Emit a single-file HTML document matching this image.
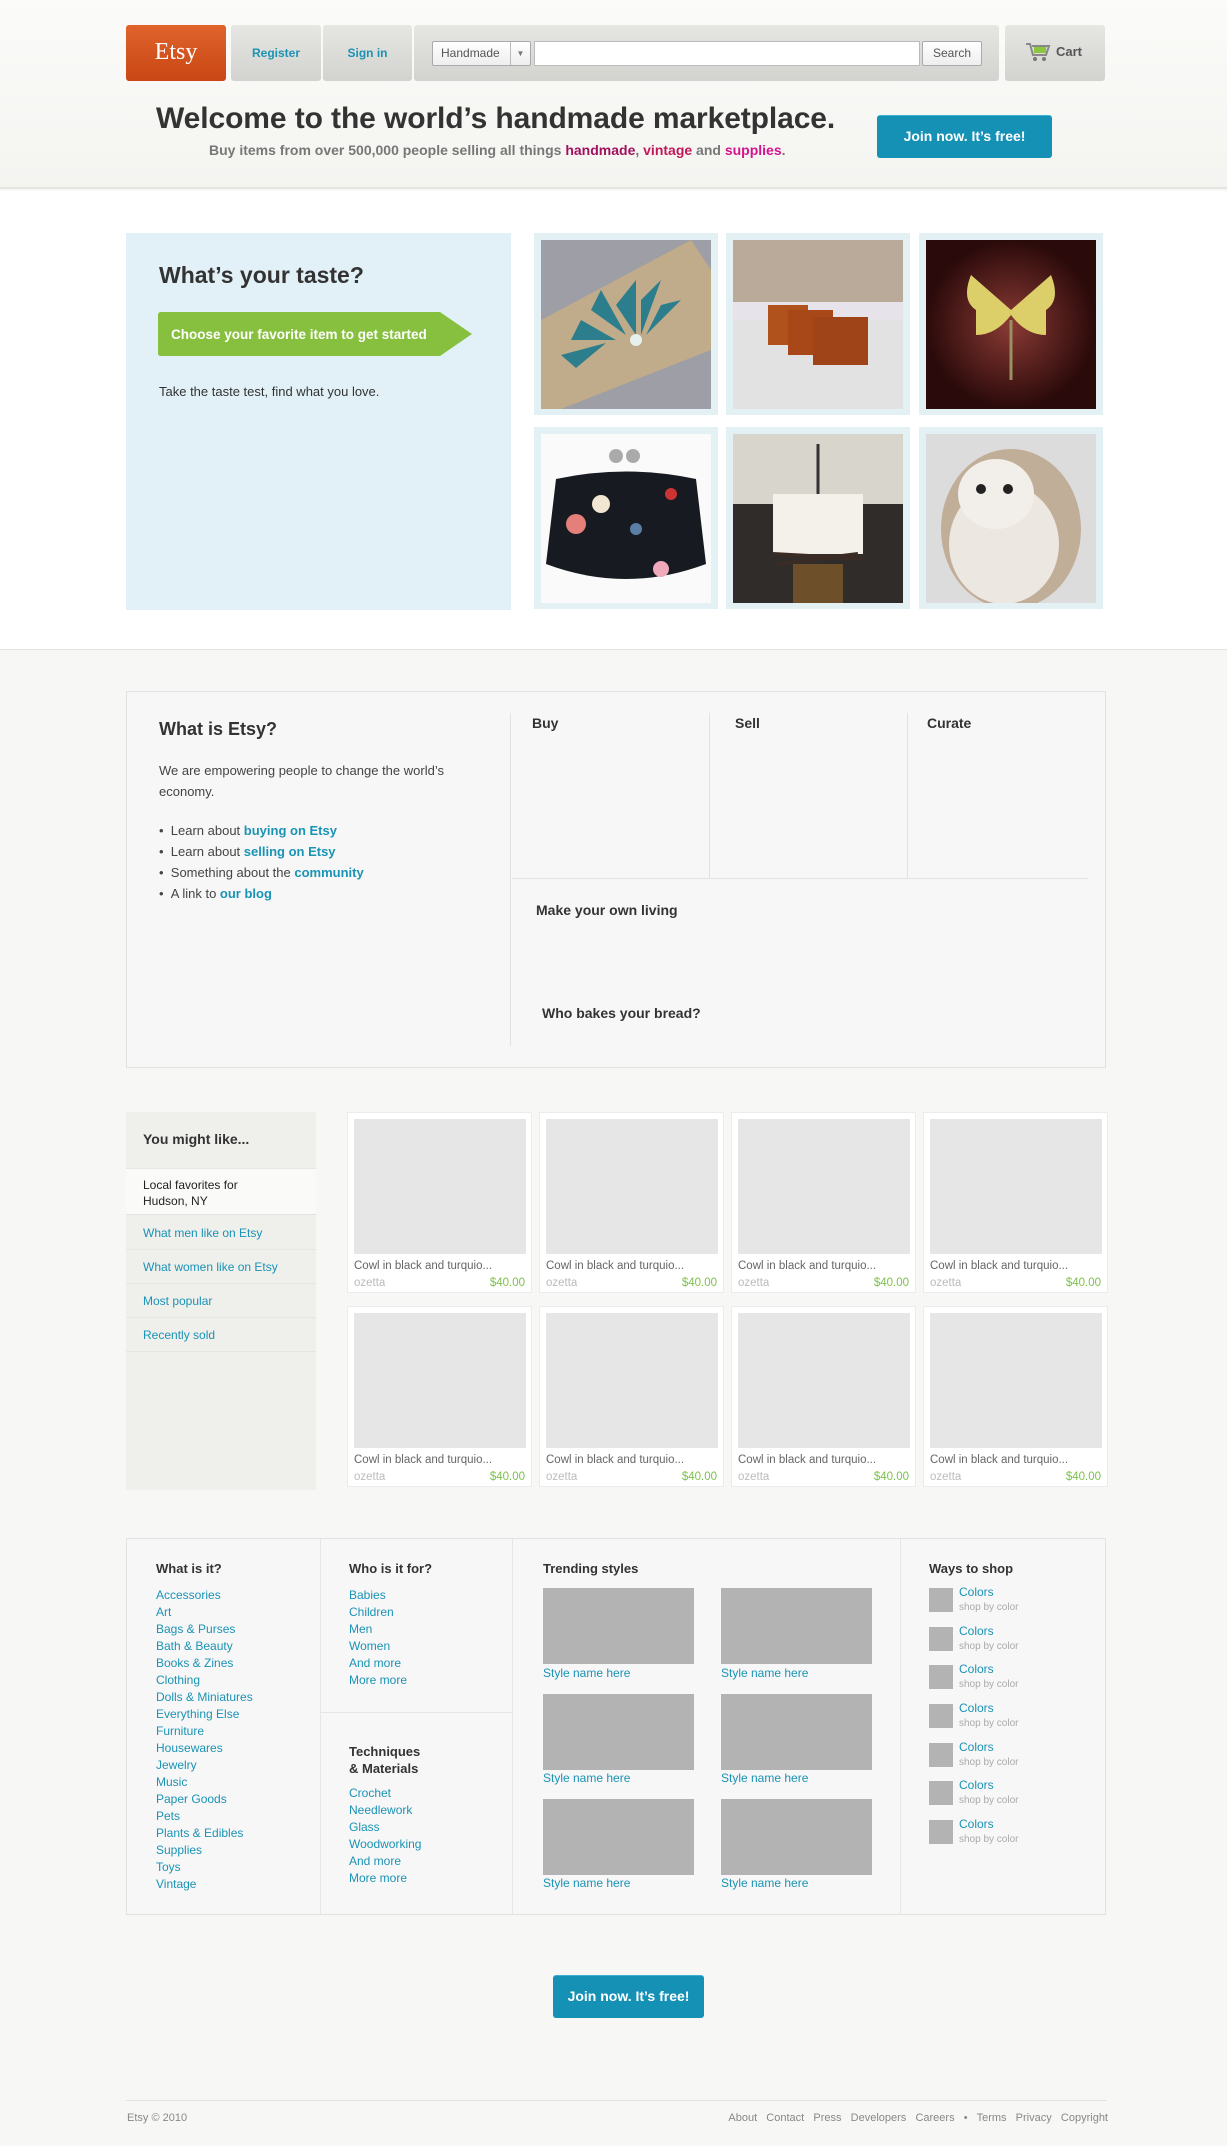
<!DOCTYPE html>
<html><head><meta charset="utf-8">
<style>
*{margin:0;padding:0;box-sizing:border-box}
body{width:1227px;height:2146px;position:relative;background:#f7f7f5;font-family:"Liberation Sans",sans-serif;color:#333;overflow:hidden}
.a{position:absolute}
a{color:#1a93b5;text-decoration:none}
.hdr{left:0;top:0;width:1227px;height:189px;background:linear-gradient(#fbfbf9,#f4f4f1);border-bottom:2px solid #e4e4e0}
.nav{top:25px;height:56px;background:linear-gradient(#e6e6e3,#d2d2cf);border-radius:3px}
.nl{font-size:12px;font-weight:bold;color:#1a93b5;text-align:center;line-height:56px}
.white{left:0;top:191px;width:1227px;height:459px;background:#fff;border-bottom:1px solid #e2e2e2}
.frame{background:#e3f1f5;width:184px;height:182px}
.frame svg{position:absolute;left:7px;top:7px;width:170px;height:169px}
.box{border:1px solid #e2e2e2;background:#f7f7f7}
.h{font-weight:bold;color:#333}
.card{background:#fff;border:1px solid #ececec;width:185px;height:181px}
.card .im{position:absolute;left:6px;top:6px;width:172px;height:135px;background:#e6e6e6}
.card .t{position:absolute;left:6px;top:147px;font-size:11.5px;color:#666;white-space:nowrap}
.card .s{position:absolute;left:6px;top:164px;font-size:11.5px;color:#bbb}
.card .p{position:absolute;right:6px;top:164px;font-size:11.5px;color:#7cc04b}
.side{font-size:12px;left:0;width:190px;padding-left:17px;border-bottom:1px solid #e6e6e3}
.fl{font-size:12px;line-height:17px}
.gb{background:#b3b3b3}
.btn{background:#1591b6;color:#fff;font-weight:bold;font-size:14px;text-align:center;border-radius:3px;border-top:1px solid #3bb0d3}
.ws{position:relative;height:38.7px}
.ws .q{position:absolute;left:0;top:0;width:24px;height:24px;background:#b3b3b3}
.ws .x{position:absolute;left:30px;top:-3px;font-size:12px;line-height:14px;white-space:nowrap}
.ws .x span{color:#aaa;font-size:10px}
</style></head><body>
<div class="a hdr"></div>
<div class="a nav" style="left:126px;width:100px;background:linear-gradient(#e0632c,#c94714);"><div style="font-family:'Liberation Serif',serif;color:#fff;font-size:24px;text-align:center;line-height:54px">Etsy</div></div>
<div class="a nav nl" style="left:231px;width:90px">Register</div>
<div class="a nav nl" style="left:323px;width:89px">Sign in</div>
<div class="a nav" style="left:414px;width:585px"></div>
<div class="a" style="left:432px;top:41px;width:99px;height:25px;background:linear-gradient(#fff,#eee);border:1px solid #aaa;border-radius:2px;font-size:12px;color:#555;line-height:23px;padding-left:8px">Handmade<span style="position:absolute;right:0;top:0;width:20px;height:23px;border-left:1px solid #bbb;font-size:8px;text-align:center;color:#777">▼</span></div>
<div class="a" style="left:534px;top:41px;width:386px;height:25px;background:#fff;border:1px solid #bbb"></div>
<div class="a" style="left:922px;top:41px;width:60px;height:25px;background:linear-gradient(#fff,#eee);border:1px solid #aaa;border-radius:2px;font-size:12px;color:#555;line-height:23px;text-align:center">Search</div>
<div class="a nav" style="left:1005px;width:100px"><svg class="a" style="left:20px;top:16px" width="26" height="22" viewBox="0 0 26 22"><path d="M1 3h4l3 11h13l3-9H7" fill="none" stroke="#888" stroke-width="2"/><rect x="9" y="6" width="12" height="6" fill="#8cc63f"/><circle cx="10" cy="18" r="2" fill="#777"/><circle cx="19" cy="18" r="2" fill="#777"/></svg><div class="a" style="left:51px;top:0;line-height:54px;font-size:13px;font-weight:bold;color:#555">Cart</div></div>
<div class="a" style="left:156px;top:102px;font-size:30px;font-weight:bold;color:#333;letter-spacing:-.1px">Welcome to the world’s handmade marketplace.</div>
<div class="a" style="left:209px;top:142px;font-size:14px;font-weight:bold;color:#777">Buy items from over 500,000 people selling all things <span style="color:#a0115e">handmade</span>, <span style="color:#c1185b">vintage</span> and <span style="color:#d4148e">supplies</span>.</div>
<div class="a btn" style="left:877px;top:115px;width:175px;height:43px;line-height:41px">Join now. It’s free!</div>

<div class="a white"></div>
<div class="a" style="left:126px;top:233px;width:385px;height:377px;background:#e2f1f7"></div>
<div class="a" style="left:159px;top:262px;font-size:23px;font-weight:bold;color:#333">What’s your taste?</div>
<svg class="a" style="left:158px;top:312px" width="314" height="44"><path d="M3 0H282L314 22L282 44H3Q0 44 0 41V3Q0 0 3 0Z" fill="#87c03f"/><text x="13" y="27" font-family="Liberation Sans" font-weight="bold" font-size="13.5" fill="#fff">Choose your favorite item to get started</text></svg>
<div class="a" style="left:159px;top:384px;font-size:13px;color:#333">Take the taste test, find what you love.</div>

<div class="a frame" style="left:534px;top:233px"><svg viewBox="0 0 170 169"><rect width="170" height="169" fill="#9d9ea6"/><path d="M0 80L150 0L170 30V110L20 169H0Z" fill="#c0ab8a"/><g fill="#2c7e8c"><path d="M20 115l45-12-30 25z"/><path d="M40 80l35 20-45 0z"/><path d="M60 50l25 45-35-25z"/><path d="M95 40l0 55-20-30z"/><path d="M120 40l-20 55 0-35z"/><path d="M140 60l-35 35 15-30z"/></g><circle cx="95" cy="100" r="6" fill="#e8f0ee"/></svg></div>
<div class="a frame" style="left:726px;top:233px"><svg viewBox="0 0 170 169"><rect width="170" height="169" fill="#e2e2e2"/><rect width="170" height="70" fill="#b9aa9a"/><rect y="62" width="170" height="18" fill="#e6e4ea"/><rect x="35" y="65" width="40" height="40" fill="#b0521c"/><rect x="55" y="70" width="45" height="45" fill="#a84818"/><rect x="80" y="77" width="55" height="48" fill="#9e4418"/></svg></div>
<div class="a frame" style="left:919px;top:233px"><svg viewBox="0 0 170 169"><defs><radialGradient id="r"><stop offset="0" stop-color="#8a3a34"/><stop offset="1" stop-color="#2a0a0a"/></radialGradient></defs><rect width="170" height="169" fill="url(#r)"/><path d="M85 70L45 35Q35 60 50 70L50 95Q70 95 85 75Z" fill="#dccf6a"/><path d="M85 70L125 35Q135 60 120 70L120 95Q100 95 85 75Z" fill="#dccf6a"/><path d="M85 80v60" stroke="#9a9060" stroke-width="3"/></svg></div>
<div class="a frame" style="left:534px;top:427px"><svg viewBox="0 0 170 169"><rect width="170" height="169" fill="#fafafa"/><path d="M15 45Q85 30 155 45L165 130Q85 160 5 130Z" fill="#171a20"/><circle cx="75" cy="22" r="7" fill="#aaa"/><circle cx="92" cy="22" r="7" fill="#aaa"/><circle cx="60" cy="70" r="9" fill="#f1e6d2"/><circle cx="35" cy="90" r="10" fill="#e47f7a"/><circle cx="95" cy="95" r="6" fill="#5b7ea6"/><circle cx="120" cy="135" r="8" fill="#eab"/><circle cx="130" cy="60" r="6" fill="#c33"/></svg></div>
<div class="a frame" style="left:726px;top:427px"><svg viewBox="0 0 170 169"><rect width="170" height="169" fill="#d8d6cc"/><rect y="70" width="170" height="99" fill="#2f2c2a"/><path d="M85 10v50" stroke="#333" stroke-width="3"/><rect x="40" y="60" width="90" height="60" fill="#f3f1ea"/><path d="M40 120l90 5M45 130l80-10" stroke="#3a2c24" stroke-width="4"/><rect x="60" y="130" width="50" height="39" fill="#6d4f2a"/></svg></div>
<div class="a frame" style="left:919px;top:427px"><svg viewBox="0 0 170 169"><rect width="170" height="169" fill="#dcdcdc"/><ellipse cx="85" cy="95" rx="70" ry="80" fill="#c0ae98"/><ellipse cx="78" cy="110" rx="55" ry="60" fill="#ece7e0"/><ellipse cx="70" cy="60" rx="38" ry="35" fill="#f2efea"/><circle cx="55" cy="55" r="5" fill="#222"/><circle cx="82" cy="55" r="5" fill="#222"/></svg></div>

<div class="a box" style="left:126px;top:691px;width:980px;height:377px"></div>
<div class="a" style="left:510px;top:713px;width:1px;height:333px;background:#e2e2e2"></div>
<div class="a" style="left:709px;top:713px;width:1px;height:165px;background:#e2e2e2"></div>
<div class="a" style="left:907px;top:713px;width:1px;height:165px;background:#e2e2e2"></div>
<div class="a" style="left:512px;top:878px;width:576px;height:1px;background:#e2e2e2"></div>
<div class="a h" style="left:159px;top:719px;font-size:18px">What is Etsy?</div>
<div class="a" style="left:159px;top:760px;font-size:13px;line-height:21px;color:#444;width:340px">We are empowering people to change the world’s economy.</div>
<div class="a" style="left:159px;top:820px;font-size:13px;line-height:21px;color:#444">• &nbsp;Learn about <a><b>buying on Etsy</b></a><br>• &nbsp;Learn about <a><b>selling on Etsy</b></a><br>• &nbsp;Something about the <a><b>community</b></a><br>• &nbsp;A link to <a><b>our blog</b></a></div>
<div class="a h" style="left:532px;top:715px;font-size:14px">Buy</div>
<div class="a h" style="left:735px;top:715px;font-size:14px">Sell</div>
<div class="a h" style="left:927px;top:715px;font-size:14px">Curate</div>
<div class="a h" style="left:536px;top:902px;font-size:14px">Make your own living</div>
<div class="a h" style="left:542px;top:1005px;font-size:14px">Who bakes your bread?</div>

<div class="a" style="left:126px;top:1112px;width:190px;height:378px;background:#efefec"></div>
<div class="a h" style="left:143px;top:1131px;font-size:14px">You might like...</div>
<div class="a" style="left:126px;top:1168px;width:190px;height:47px;background:#fafaf9;border-top:1px solid #e6e6e3;border-bottom:1px solid #e2e2e0"></div>
<div class="a" style="left:143px;top:1177px;font-size:12px;line-height:16px;color:#222">Local favorites for<br>Hudson, NY</div>
<div class="a side" style="left:126px;top:1216px;height:34px;line-height:34px"><a>What men like on Etsy</a></div>
<div class="a side" style="left:126px;top:1250px;height:34px;line-height:34px"><a>What women like on Etsy</a></div>
<div class="a side" style="left:126px;top:1284px;height:34px;line-height:34px"><a>Most popular</a></div>
<div class="a side" style="left:126px;top:1318px;height:34px;line-height:34px"><a>Recently sold</a></div>

<div class="a card" style="left:347px;top:1112px"><div class="im"></div><div class="t">Cowl in black and turquio...</div><div class="s">ozetta</div><div class="p">$40.00</div></div>
<div class="a card" style="left:539px;top:1112px"><div class="im"></div><div class="t">Cowl in black and turquio...</div><div class="s">ozetta</div><div class="p">$40.00</div></div>
<div class="a card" style="left:731px;top:1112px"><div class="im"></div><div class="t">Cowl in black and turquio...</div><div class="s">ozetta</div><div class="p">$40.00</div></div>
<div class="a card" style="left:923px;top:1112px"><div class="im"></div><div class="t">Cowl in black and turquio...</div><div class="s">ozetta</div><div class="p">$40.00</div></div>
<div class="a card" style="left:347px;top:1306px"><div class="im"></div><div class="t">Cowl in black and turquio...</div><div class="s">ozetta</div><div class="p">$40.00</div></div>
<div class="a card" style="left:539px;top:1306px"><div class="im"></div><div class="t">Cowl in black and turquio...</div><div class="s">ozetta</div><div class="p">$40.00</div></div>
<div class="a card" style="left:731px;top:1306px"><div class="im"></div><div class="t">Cowl in black and turquio...</div><div class="s">ozetta</div><div class="p">$40.00</div></div>
<div class="a card" style="left:923px;top:1306px"><div class="im"></div><div class="t">Cowl in black and turquio...</div><div class="s">ozetta</div><div class="p">$40.00</div></div>

<div class="a box" style="left:126px;top:1538px;width:980px;height:377px"></div>
<div class="a" style="left:320px;top:1539px;width:1px;height:375px;background:#e6e6e6"></div>
<div class="a" style="left:512px;top:1539px;width:1px;height:375px;background:#e6e6e6"></div>
<div class="a" style="left:900px;top:1539px;width:1px;height:375px;background:#e6e6e6"></div>
<div class="a" style="left:321px;top:1712px;width:191px;height:1px;background:#e6e6e6"></div>
<div class="a h" style="left:156px;top:1561px;font-size:13px">What is it?</div>
<div class="a fl" style="left:156px;top:1587px"><a>Accessories</a><br><a>Art</a><br><a>Bags &amp; Purses</a><br><a>Bath &amp; Beauty</a><br><a>Books &amp; Zines</a><br><a>Clothing</a><br><a>Dolls &amp; Miniatures</a><br><a>Everything Else</a><br><a>Furniture</a><br><a>Housewares</a><br><a>Jewelry</a><br><a>Music</a><br><a>Paper Goods</a><br><a>Pets</a><br><a>Plants &amp; Edibles</a><br><a>Supplies</a><br><a>Toys</a><br><a>Vintage</a></div>
<div class="a h" style="left:349px;top:1561px;font-size:13px">Who is it for?</div>
<div class="a fl" style="left:349px;top:1587px"><a>Babies</a><br><a>Children</a><br><a>Men</a><br><a>Women</a><br><a>And more</a><br><a>More more</a></div>
<div class="a h" style="left:349px;top:1743px;font-size:13px;line-height:17px">Techniques<br>&amp; Materials</div>
<div class="a fl" style="left:349px;top:1785px"><a>Crochet</a><br><a>Needlework</a><br><a>Glass</a><br><a>Woodworking</a><br><a>And more</a><br><a>More more</a></div>
<div class="a h" style="left:543px;top:1561px;font-size:13px">Trending styles</div>
<div class="a gb" style="left:543px;top:1588px;width:151px;height:76px"></div>
<div class="a gb" style="left:721px;top:1588px;width:151px;height:76px"></div>
<div class="a gb" style="left:543px;top:1694px;width:151px;height:76px"></div>
<div class="a gb" style="left:721px;top:1694px;width:151px;height:76px"></div>
<div class="a gb" style="left:543px;top:1799px;width:151px;height:76px"></div>
<div class="a gb" style="left:721px;top:1799px;width:151px;height:76px"></div>
<div class="a fl" style="left:543px;top:1665px"><a>Style name here</a></div>
<div class="a fl" style="left:721px;top:1665px"><a>Style name here</a></div>
<div class="a fl" style="left:543px;top:1770px"><a>Style name here</a></div>
<div class="a fl" style="left:721px;top:1770px"><a>Style name here</a></div>
<div class="a fl" style="left:543px;top:1875px"><a>Style name here</a></div>
<div class="a fl" style="left:721px;top:1875px"><a>Style name here</a></div>
<div class="a h" style="left:929px;top:1561px;font-size:13px">Ways to shop</div>
<div class="a" style="left:929px;top:1588px;width:160px">
<div class="ws"><div class="q"></div><div class="x"><a>Colors</a><br><span>shop by color</span></div></div>
<div class="ws"><div class="q"></div><div class="x"><a>Colors</a><br><span>shop by color</span></div></div>
<div class="ws"><div class="q"></div><div class="x"><a>Colors</a><br><span>shop by color</span></div></div>
<div class="ws"><div class="q"></div><div class="x"><a>Colors</a><br><span>shop by color</span></div></div>
<div class="ws"><div class="q"></div><div class="x"><a>Colors</a><br><span>shop by color</span></div></div>
<div class="ws"><div class="q"></div><div class="x"><a>Colors</a><br><span>shop by color</span></div></div>
<div class="ws"><div class="q"></div><div class="x"><a>Colors</a><br><span>shop by color</span></div></div>
</div>

<div class="a btn" style="left:553px;top:1975px;width:151px;height:43px;line-height:41px">Join now. It’s free!</div>
<div class="a" style="left:126px;top:2100px;width:981px;height:1px;background:#e2e2e2"></div>
<div class="a" style="left:127px;top:2112px;font-size:11px;color:#888">Etsy © 2010</div>
<div class="a" style="right:119px;top:2112px;font-size:11px;color:#888;white-space:nowrap">About &nbsp; Contact &nbsp; Press &nbsp; Developers &nbsp; Careers &nbsp; • &nbsp; Terms &nbsp; Privacy &nbsp; Copyright</div>
</body></html>
